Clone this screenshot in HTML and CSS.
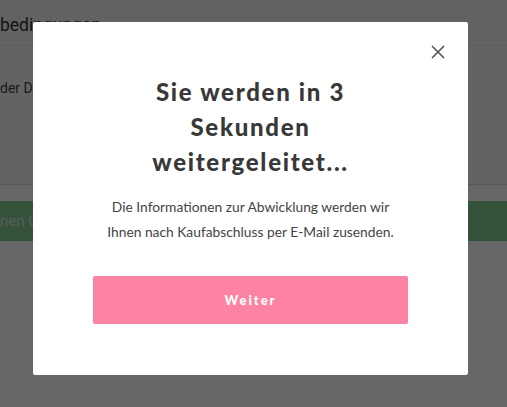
FILE: index.html
```html
<!DOCTYPE html>
<html lang="de">
<head>
<meta charset="utf-8">
<title>Weiterleitung</title>
<link rel="stylesheet" href="styles.css">
</head>
<body>
<div class="page">
  <div class="page-head"><h2 class="page-title">bedingungen</h2></div>
  <div class="page-body"><p class="page-text">der D</p></div>
  <div class="page-gap"></div>
  <div class="page-bar"><span class="bar-text">nen G</span></div>
</div>
<div class="overlay">
  <div class="modal">
    <button class="close" aria-label="Schließen">
      <svg width="14" height="14" viewBox="0 0 14 14"><path d="M1 1L13 13M13 1L1 13" stroke="#555" stroke-width="1.6" fill="none"/></svg>
    </button>
    <h1 class="title">Sie werden in 3 Sekunden weitergeleitet...</h1>
    <p class="info">Die Informationen zur Abwicklung werden wir<br>Ihnen nach Kaufabschluss per E-Mail zusenden.</p>
    <button class="weiter">Weiter</button>
  </div>
</div>
</body>
</html>
```
FILE: styles.css
```css
html, body {
  margin: 0;
  padding: 0;
  height: 100%;
  overflow: hidden;
}
body {
  background: #ffffff;
  font-family: Roboto, "Liberation Sans", sans-serif;
}
.page {
  display: flex;
  flex-direction: column;
  background: #f5f5f5;
}
.page-head {
  height: 46px;
  border-bottom: 1px solid #e6e6e6;
  box-sizing: border-box;
}
.page-title {
  margin: 0;
  padding-top: 14px;
  font-size: 17.5px;
  font-weight: 400;
  color: #333;
  line-height: 22px;
}
.page-body {
  height: 139px;
  border-bottom: 1px solid #dcdcdc;
  box-sizing: border-box;
  background: #f7f7f7;
}
.page-text {
  margin: 0;
  padding-top: 32px;
  font-size: 14px;
  color: #444;
  line-height: 20px;
}
.page-gap {
  height: 16px;
  background: #ffffff;
}
.page-bar {
  height: 40px;
  background: #82ce90;
  display: flex;
  align-items: center;
}
.bar-text {
  font-size: 15px;
  color: #d9e8dc;
}
.overlay {
  position: fixed;
  inset: 0;
  background: rgba(0, 0, 0, 0.6);
  display: flex;
  align-items: flex-start;
  padding: 22px 0 0 33px;
}
.modal {
  position: relative;
  width: 435px;
  height: 353px;
  box-sizing: border-box;
  background: #fff;
  border-radius: 2px;
  padding: 52px 0 0;
  display: flex;
  flex-direction: column;
  align-items: center;
}
.close {
  position: absolute;
  top: 23px;
  right: 23px;
  width: 14px;
  height: 14px;
  padding: 0;
  border: 0;
  background: none;
  display: flex;
}
.title {
  margin: 0;
  max-width: 250px;
  text-align: center;
  font-family: Lato, "Noto Sans", sans-serif;
  font-weight: 900;
  font-size: 24px;
  line-height: 35px;
  letter-spacing: 1.7px;
  color: #383838;
}
.info {
  margin: 15px 0 0;
  text-align: center;
  font-family: Lato, "Noto Sans", sans-serif;
  font-size: 13.8px;
  line-height: 25px;
  color: #444;
}
.weiter {
  margin-top: 32px;
  width: 315px;
  height: 48px;
  border: 0;
  border-radius: 2px;
  background: #fd83a2;
  color: #fff;
  font-family: Lato, "Noto Sans", sans-serif;
  font-weight: 900;
  font-size: 13px;
  letter-spacing: 2px;
}
```
